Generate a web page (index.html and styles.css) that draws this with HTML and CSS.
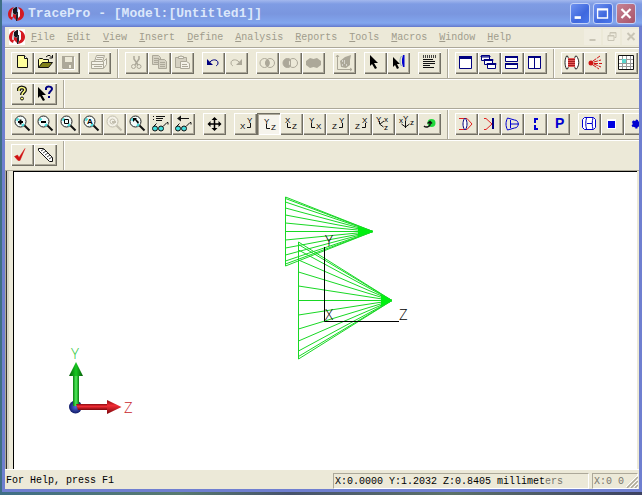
FILE: index.html
```html
<!DOCTYPE html>
<html lang="en">
<head>
<meta charset="utf-8">
<title>TracePro - [Model:[Untitled1]]</title>
<link rel="stylesheet" href="styles.css">
</head>
<body>
<svg class="defs" aria-hidden="true">
  <symbol id="logo" viewBox="0 0 16 16"><path d="M6 1C2 2 0 5 0 8s1 5 4 6l1-3-2-1 1-6zM10 1c4 1 6 4 6 7s-2 6-7 7l1-3 2-2V4z" fill="#d41820"/><path d="M6 2l3-1v6L6 10l-3 1 1-6z" fill="#c9ccd2"/><path d="M5 3l3-2h1v6L7 9 5 7z" fill="#15161c"/><path d="M5 8l3 1v5l-3-3z" fill="#d41820"/><path d="M9 6h1v6l-1 3H8V9z" fill="#22232a"/><path d="M10 3l2 1v6l-2 2z" fill="#f6f8fc"/></symbol>
  <symbol id="lens" viewBox="0 0 23 22"><circle cx="9.500" cy="8.500" r="5.500" fill="#f2fbfa" stroke="#222" stroke-width="1"/><path d="M5.500 7.500l2-2M11 13l2-2" stroke="#4dd" stroke-width="2" fill="none"/><path d="M13.500 12.500l5 5" stroke="#111" stroke-width="2"/></symbol>
  <symbol id="glasses" viewBox="0 0 23 22"><circle cx="6" cy="15.500" r="2.500" fill="#4dd" stroke="#111"/><circle cx="12" cy="15.500" r="2.500" fill="#4dd" stroke="#111"/><path d="M4.500 13.500l3-3M14 13.500l4-4h1v2" fill="none" stroke="#111"/></symbol>
</svg>
<div class="desktop">
<main class="window">
  <header class="titlebar">
    <svg class="logo"><use href="#logo"/></svg>
    <h1>TracePro - [Model:[Untitled1]]</h1>
    <div class="caption">
      <button class="cap" aria-label="Minimize"><svg viewBox="0 0 20 20"><path d="M4 14.500h7" stroke="#fff" stroke-width="3"/></svg></button>
      <button class="cap" aria-label="Maximize"><svg viewBox="0 0 20 20"><path d="M4 5h11v10H4zM4 6h11" stroke="#fff" fill="none" stroke-width="1.500"/></svg></button>
      <button class="cap close" aria-label="Close"><svg viewBox="0 0 20 20"><path d="M5 5l10 10M15 5L5 15" stroke="#fff" stroke-width="2.500"/></svg></button>
    </div>
  </header>
  <nav class="menubar">
    <svg class="logo"><use href="#logo"/></svg>
    <a href="#"><u>F</u>ile</a><a href="#"><u>E</u>dit</a><a href="#"><u>V</u>iew</a><a href="#"><u>I</u>nsert</a><a href="#"><u>D</u>efine</a><a href="#"><u>A</u>nalysis</a><a href="#"><u>R</u>eports</a><a href="#"><u>T</u>ools</a><a href="#"><u>M</u>acros</a><a href="#"><u>W</u>indow</a><a href="#"><u>H</u>elp</a>
    <div class="mdi">
      <button aria-label="Minimize document"><svg viewBox="0 0 16 16"><path d="M5 11h6" stroke="#c9c5b6" stroke-width="2"/></svg></button>
      <button aria-label="Restore document"><svg viewBox="0 0 16 16"><path d="M6.500 6V3.500h6v5H11M4.500 6.500h6v5h-6zM4.500 7h6M6.500 4h6" stroke="#c9c5b6" fill="none"/></svg></button>
      <button aria-label="Close document"><svg viewBox="0 0 16 16"><path d="M5 4l7 7M12 4l-7 7" stroke="#c9c5b6" stroke-width="2"/></svg></button>
    </div>
  </nav>

  <div class="toolbars">
  <div class="row">
    <div class="band">
      <div class="group">
        <button aria-label="New"><svg viewBox="0 0 23 22"><path d="M6.500 3.500h7l3 3v9h-10z" fill="#ffff9c" stroke="#111"/><path d="M13.500 3.500v3h3" fill="#fff" stroke="#111"/></svg></button>
        <button aria-label="Open"><svg viewBox="0 0 23 22"><path d="M4.500 15.500v-8l1-1h3l1 1h5v3" fill="#ffff9c" stroke="#111"/><path d="M4.500 15.500l4-5h10l-4 5z" fill="#808018" stroke="#111"/><path d="M12 5l2-1.500h2l2 2M18.500 3v3h-3" fill="none" stroke="#111"/></svg></button>
        <button aria-label="Save"><svg viewBox="0 0 23 22"><path d="M5 4h12v13H6l-1-1z" fill="#aca899"/><path d="M8 5h7v5H8zM12 13h2v3h-2z" fill="#ece9d8"/><path d="M17.500 5v12.500H6" stroke="#fff" fill="none"/></svg></button>
      </div>
      <div class="group">
        <button aria-label="Print"><svg viewBox="0 0 23 22"><g stroke="#aca899" fill="#f4f2e8"><path d="M6.500 9.500l2-6h8l-2 6zM9 5.500h6M8 7.500h6"/><path d="M3.500 9.500h12l3-3v6l-3 4h-12z"/><path d="M4 12.500h12M6 14.500h8M15.500 10v6"/></g></svg></button>
      </div>
    </div>
    <div class="band">
      <div class="group">
        <button aria-label="Cut"><svg viewBox="0 0 23 22"><path d="M9 4v3l4 6M14 4v3l-4 6" stroke="#aca899" fill="none" stroke-width="1.500"/><circle cx="8.500" cy="14.500" r="2" fill="none" stroke="#aca899"/><circle cx="14" cy="14.500" r="2" fill="none" stroke="#aca899"/></svg></button>
        <button aria-label="Copy"><svg viewBox="0 0 23 22"><g stroke="#aca899" fill="#d5d1c2"><path d="M4.500 3.500h6l2 2v7h-8z"/><path d="M6 6.500h5M6 8.500h5M6 10.500h5"/><path d="M10.500 7.500h6l2 2v7h-8z"/><path d="M12 10.500h5M12 12.500h5M12 14.500h5"/></g></svg></button>
        <button aria-label="Paste"><svg viewBox="0 0 23 22"><g stroke="#aca899" fill="#d5d1c2"><path d="M4.500 5.500h11v10h-11z"/><path d="M7.500 6.500v-2h2l.5-1 .5 1h2v2z" fill="#f4f2e8"/><path d="M9.500 9.500h6l3 2v5h-9z" fill="#f4f2e8"/><path d="M11 12.500h5M11 14.500h6"/></g></svg></button>
      </div>
      <div class="group">
        <button aria-label="Undo"><svg viewBox="0 0 23 22"><path d="M8 10c2-3 8-3 8 1 0 2-1 2-2 3" fill="none" stroke="#000080" stroke-width="1"/><path d="M5 7v6h6z" fill="#000080"/></svg></button>
        <button aria-label="Redo"><svg viewBox="0 0 23 22"><path d="M14 10c-2-3-8-3-8 1 0 2 1 2 2 3" fill="none" stroke="#aca899" stroke-width="1"/><path d="M17 7v6h-6z" fill="#aca899"/></svg></button>
      </div>
      <div class="group">
        <button aria-label="Intersect"><svg viewBox="0 0 23 22"><path d="M11.500 7c3 2 3 6 0 8-3-2-3-6 0-8" fill="#aca899"/><g fill="none" stroke="#aca899"><ellipse cx="8.500" cy="11" rx="4.500" ry="4.500"/><ellipse cx="14" cy="11" rx="4.500" ry="4.500"/></g></svg></button>
        <button aria-label="Subtract"><svg viewBox="0 0 23 22"><circle cx="8.500" cy="11" r="4.500" fill="#aca899" stroke="#aca899"/><circle cx="14" cy="11" r="4.500" fill="#ece9d8" stroke="#aca899"/><path d="M11.500 8v6" stroke="#aca899" fill="none"/></svg></button>
        <button aria-label="Unite"><svg viewBox="0 0 23 22"><path d="M8 6l3.500 1L15 6l4 3v4l-4 3-3.500-1L8 16l-4-3V9z" fill="#aca899"/></svg></button>
      </div>
      <div class="group">
        <button aria-label="Scale"><svg viewBox="0 0 23 22"><path d="M4.500 3v14.500H19M3 5l1.500-2L6 5M17 16l2 1.500-2 1.500" fill="none" stroke="#aca899"/><path d="M7 9l5-4 6-2-1 5v5l-4 3-5-1z" fill="#aca899"/><path d="M9 9h1M11 11h1M9 13h1M13 13h1M11 9h1" stroke="#fff"/></svg></button>
      </div>
      <div class="group">
        <button aria-label="Select"><svg viewBox="0 0 23 22"><path d="M6 3l8 8h-4l3 5-2 1-3-5-2 2z" fill="#000"/></svg></button>
        <button aria-label="Select surface"><svg viewBox="0 0 23 22"><path d="M6 5l7 7h-3l2 4-2 1-2-4-2 2z" fill="#000"/><path d="M14.500 4c-2 3-2 7 0 10" stroke="#8aa" fill="none"/><path d="M17.500 3h-1.500l-1 4v4l1 4h1.500z" fill="#0000d0"/></svg></button>
      </div>
      <div class="group">
        <button aria-label="Properties"><svg viewBox="0 0 23 22"><path d="M5.500 3v3M7.500 3v3M9.500 3v3M11.500 3v3M13.500 3v3M15.500 3v3M17.500 3v3" stroke="#444"/><path d="M5 7.500h10M5 9.500h12M5 11.500h12M5 13.500h7M5 15.500h11" stroke="#111"/></svg></button>
      </div>
    </div>
    <div class="band">
      <div class="group">
        <button aria-label="New window"><svg viewBox="0 0 23 22"><path d="M4.500 4.500h12v12h-12z" fill="#fff" stroke="#000080"/><path d="M4 5.500h13" stroke="#000080" stroke-width="3"/></svg></button>
        <button aria-label="Cascade"><svg viewBox="0 0 23 22"><g fill="#fff" stroke="#000080"><path d="M3.500 3.500h8v5h-8zM3 4h9v1H3z"/><path d="M6.500 7.500h8v5h-8zM6 7.500h9v1H6z"/><path d="M9.500 11.500h8v5h-8zM9 11.500h9v1H9z"/></g></svg></button>
        <button aria-label="Tile horizontally"><svg viewBox="0 0 23 22"><g fill="#fff" stroke="#000080"><path d="M4.500 4.500h12v5h-12zM4.500 11.500h12v5h-12z"/><path d="M4 5h13M4 12h13" stroke-width="2"/></g></svg></button>
        <button aria-label="Tile vertically"><svg viewBox="0 0 23 22"><path d="M4.500 4.500h12v12h-12zM10.500 5v11" fill="#fff" stroke="#000080"/><path d="M4 5h13" stroke="#000080" stroke-width="2"/></svg></button>
      </div>
    </div>
    <div class="band">
      <div class="group">
        <button aria-label="Trace rays"><svg viewBox="0 0 23 22"><path d="M5.500 4c-2 4-2 9 0 13h1c2-4 2-9 0-13zM14.500 4h1c3 4 3 9 0 13h-1c-2-4-2-9 0-13z" fill="#fff" stroke="#222"/><path d="M7 6h7v9H7z" fill="#e45b57"/><path d="M7 7.500h7M7 9.500h7M7 11.500h7M7 13.500h7" stroke="#a61c20"/></svg></button>
        <button aria-label="Source rays"><svg viewBox="0 0 23 22"><circle cx="7" cy="11" r="2.500" fill="#d01414"/><path d="M9 9l7-5M10 10l7-2M10 11.500h8M10 12l7 3M9 13l6 4" stroke="#d01414" stroke-dasharray="4 1"/></svg></button>
      </div>
      <div class="group">
        <button aria-label="Irradiance map"><svg viewBox="0 0 23 22"><path d="M3.500 3.500h15v14h-15z" fill="#fff" stroke="#111"/><path d="M7.500 4v13M11.500 4v13M15.500 4v13M4 7.500h14M4 11.500h14M4 14.500h14" stroke="#999"/><path d="M7 7h4v4H7z" fill="#5cd6cf"/></svg></button>
      </div>
    </div>
  </div>

  <div class="row">
    <div class="band">
      <div class="group">
        <button aria-label="About"><svg viewBox="0 0 23 22"><path d="M8 8V6c1-2 6-2 6 1 0 2-3 2-3 5" stroke="#111" stroke-width="4" fill="none"/><path d="M8 8V6c1-2 6-2 6 1 0 2-3 2-3 5" stroke="#ffff80" stroke-width="1.500" fill="none"/><circle cx="11" cy="15.500" r="1.500" fill="#ffff80" stroke="#111"/></svg></button>
        <button aria-label="Context help"><svg viewBox="0 0 23 22"><path d="M4 4l8 8H8l3 5-2 1-3-5-2 2z" fill="#000"/><path d="M12 7V5c1-2 6-2 6 1 0 2-3 2-3 5M15 13v2" stroke="#000080" stroke-width="2" fill="none"/></svg></button>
      </div>
    </div>
    <div class="band"></div>
  </div>

  <div class="row">
    <div class="band">
      <div class="group">
        <button aria-label="Zoom in"><svg viewBox="0 0 23 22"><use href="#lens"/><path d="M7 9h5M9.500 6.500v5" stroke="#000" stroke-width="2"/></svg></button>
        <button aria-label="Zoom out"><svg viewBox="0 0 23 22"><use href="#lens"/><path d="M7 9h5" stroke="#000" stroke-width="2"/></svg></button>
        <button aria-label="Zoom window"><svg viewBox="0 0 23 22"><use href="#lens"/><path d="M7.500 6.500h4v4h-4z" stroke="#000" fill="none"/></svg></button>
        <button aria-label="Zoom all"><svg viewBox="0 0 23 22"><use href="#lens"/><text x="7" y="11" class="tiny bold">A</text></svg></button>
        <button aria-label="Zoom previous"><svg viewBox="0 0 23 22"><circle cx="9.500" cy="8.500" r="5.500" fill="#f4f2e8" stroke="#c2beae"/><circle cx="9.500" cy="8.500" r="2.500" fill="none" stroke="#c2beae"/><path d="M9 9h4M13.500 12.500l5 5" stroke="#c2beae" stroke-width="2"/></svg></button>
        <button aria-label="Zoom selection"><svg viewBox="0 0 23 22"><use href="#lens"/><path d="M7 5h4l-1 1 3 3-1 2-3-4-2 2z" fill="#000"/></svg></button>
        <button aria-label="View list"><svg viewBox="0 0 23 22"><use href="#glasses"/><path d="M4 3.500h1M4 6.500h1M7 3.500h9M7 5.500h7M7 7.500h6" stroke="#111"/></svg></button>
        <button aria-label="Previous view"><svg viewBox="0 0 23 22"><use href="#glasses"/><path d="M7 5.500h10" stroke="#111"/><path d="M5 5.500l4-3v6z" fill="#111"/></svg></button>
      </div>
      <div class="group">
        <button aria-label="Pan"><svg viewBox="0 0 23 22"><path d="M11.500 5v12M6 11h11" stroke="#000" stroke-width="1.500"/><path d="M11.500 4L14.500 7h-6zM11.500 18L8.500 15h6zM4.500 11l3-3v6zM18.500 11l-3-3v6z" fill="#000"/></svg></button>
      </div>
      <div class="group">
        <button aria-label="XY view"><svg viewBox="0 0 23 22"><text x="6" y="16" class="tiny">X</text><text x="13" y="10" class="tiny">Y</text><path d="M16.500 10v4.500H13" class="axis"/></svg></button>
        <button aria-label="YZ view" class="pressed" aria-pressed="true"><svg viewBox="0 0 23 22"><text x="7" y="11" class="tiny">Y</text><text x="14" y="17" class="tiny">Z</text><path d="M9.500 11v4.500H13" class="axis"/></svg></button>
        <button aria-label="XZ view"><svg viewBox="0 0 23 22"><text x="5" y="10" class="tiny">X</text><text x="12" y="16" class="tiny">Z</text><path d="M7.500 10v4.500H11" class="axis"/></svg></button>
        <button aria-label="YX view"><svg viewBox="0 0 23 22"><text x="6" y="10" class="tiny">Y</text><text x="13" y="16" class="tiny">X</text><path d="M8.500 10v4.500H12" class="axis"/></svg></button>
        <button aria-label="ZY view"><svg viewBox="0 0 23 22"><text x="6" y="16" class="tiny">Z</text><text x="13" y="10" class="tiny">Y</text><path d="M16.500 10v4.500H13" class="axis"/></svg></button>
        <button aria-label="ZX view"><svg viewBox="0 0 23 22"><text x="6" y="16" class="tiny">Z</text><text x="13" y="10" class="tiny">X</text><path d="M16.500 10v4.500H13" class="axis"/></svg></button>
        <button aria-label="Isometric view"><svg viewBox="0 0 23 22"><text x="4" y="9" class="tiny">Y</text><text x="12" y="9" class="tiny">x</text><text x="12" y="17" class="tiny">z</text><path d="M7.500 8v3l4 3M8 11l4-3" class="axis"/></svg></button>
        <button aria-label="Silhouette view"><svg viewBox="0 0 23 22"><text x="8" y="8" class="tiny">Y</text><text x="4" y="10" class="tiny">x</text><text x="15" y="12" class="tiny">z</text><path d="M10.500 8v7M6.500 11l4 3 4-3" class="axis"/></svg></button>
        <button aria-label="Rotate"><svg viewBox="0 0 23 22"><circle cx="13.500" cy="10" r="4" fill="#22d93c"/><path d="M6 13c2 2 5 1 6-1V9M9.500 10.500l2.500-2 2 2" fill="none" stroke="#111" stroke-width="1.500"/></svg></button>
      </div>
    </div>
    <div class="band">
      <div class="group">
        <button aria-label="Lens"><svg viewBox="0 0 23 22"><path d="M4 5.500h8l5 5.500-5 5.500H4" fill="none" stroke="#e02020"/><path d="M9.500 5.500c-2 3-2 8 0 11h1c2-3 2-8 0-11z" fill="#fff" stroke="#000080"/></svg></button>
        <button aria-label="Mirror"><svg viewBox="0 0 23 22"><path d="M6 5.500h2l6 5.500-6 5.500H6" fill="none" stroke="#e02020"/><path d="M15 5v11" stroke="#000080" stroke-width="2"/></svg></button>
        <button aria-label="Concentrator"><svg viewBox="0 0 23 22"><path d="M6.500 5c-2 4-2 8 0 12l7-2c5 0 5-8 0-8zM9.500 7v8M10 11h8" fill="none" stroke="#0000d0"/></svg></button>
        <button aria-label="Baffle"><svg viewBox="0 0 23 22"><path d="M14 6h-3v4M11 12v4h3" fill="none" stroke="#0000d0" stroke-width="2"/></svg></button>
        <button aria-label="Prism"><svg viewBox="0 0 23 22"><text x="8" y="15" class="prism">P</text></svg></button>
      </div>
      <div class="group">
        <button aria-label="Cylinder"><svg viewBox="0 0 23 22"><path d="M6.500 4.500h9l2 2v8l-2 2h-9l-2-2v-8zM8.500 5c-1 3-1 8 0 11M15 5c-1 3-1 8 0 11M9 10.500h5" fill="#fff" stroke="#0000d0"/></svg></button>
        <button aria-label="Block"><svg viewBox="0 0 23 22"><path d="M6 6h9v10H6z" fill="#fff"/><path d="M7 8h7v7H7z" fill="#0000e0"/></svg></button>
        <button aria-label="Sphere"><svg viewBox="0 0 23 22"><circle cx="12" cy="11" r="3.500" fill="#0000d0" stroke="#0000d0" stroke-dasharray="2 2" stroke-width="2"/></svg></button>
      </div>
    </div>
  </div>

  <div class="row">
    <div class="band">
      <div class="group">
        <button aria-label="Check"><svg viewBox="0 0 23 22"><path d="M3.500 12.500l3-1.500 1.500 2.500 6-9-5 12H7z" fill="#d01010" stroke="#d01010" stroke-width=".5"/></svg></button>
        <button aria-label="Measure"><svg viewBox="0 0 23 22"><path d="M4.500 4.500h5l9 9v4h-3l-11-11z" fill="#fff" stroke="#111"/><path d="M7 7l3-2M9 9l3-2M11 11l3-2M13 13l3-2M15 15l3-2" stroke="#444"/></svg></button>
      </div>
    </div>
    <div class="band"></div>
  </div>
  </div>

  <section class="workspace">
    <div class="viewport">
      <svg viewBox="14 172 623 297" preserveAspectRatio="xMinYMin meet" role="img" aria-label="Model view">
        <defs>
          <linearGradient id="gs"><stop offset="0" stop-color="#087c10"/><stop offset=".5" stop-color="#4ff05a"/><stop offset="1" stop-color="#087c10"/></linearGradient>
          <linearGradient id="gh"><stop offset="0" stop-color="#045a08"/><stop offset=".5" stop-color="#16c820"/><stop offset="1" stop-color="#045a08"/></linearGradient>
          <linearGradient id="rs" x2="0" y2="1"><stop offset="0" stop-color="#8c0a10"/><stop offset=".4" stop-color="#f02c34"/><stop offset="1" stop-color="#7a060c"/></linearGradient>
          <radialGradient id="ball"><stop offset="0" stop-color="#5468d8"/><stop offset="1" stop-color="#101c68"/></radialGradient>
        </defs>
        <g class="rays">
          <path d="M285.500 197v69M373 231.500L285.500 197M373 231.500L285.500 198.500M373 231.500L285.500 202M373 231.500L285.500 208M373 231.500L285.500 215M373 231.500L285.500 223M373 231.500H285.500M373 231.500L285.500 240M373 231.500L285.500 248M373 231.500L285.500 255M373 231.500L285.500 261M373 231.500L285.500 264M373 231.500L285.500 266"/>
          <path d="M298.500 242v117M392 300.500L298.500 242M392 300.500L298.500 244.500M392 300.500L298.500 250M392 300.500L298.500 260M392 300.500L298.500 272M392 300.500L298.500 286M392 300.500H298.500M392 300.500L298.500 315M392 300.500L298.500 329M392 300.500L298.500 341M392 300.500L298.500 351M392 300.500L298.500 356.500M392 300.500L298.500 359"/>
          <path class="apex" d="M373 231.500l-15-5v10zM392 300.500l-11-6v12z"/>
        </g>
        <path class="axes" d="M324.500 247v74.500H399"/>
        <text class="label" x="325" y="246">Y</text>
        <text class="label" x="325" y="320">X</text>
        <text class="label" x="399" y="320">Z</text>
        <circle cx="75.500" cy="407" r="6.500" fill="url(#ball)"/>
        <path d="M73 375h6v31h-6z" fill="url(#gs)"/>
        <path d="M76 362l7 14H69z" fill="url(#gh)"/>
        <path d="M76 404h32v6H78z" fill="url(#rs)"/>
        <path d="M121.500 407L107 414v-14z" fill="url(#rs)"/>
        <text class="label y" x="71" y="359">Y</text>
        <text class="label z" x="124" y="413">Z</text>
      </svg>
    </div>
  </section>

  <footer class="statusbar">
    <span class="hint">For Help, press F1</span>
    <span class="pane coords">X:0.0000 Y:1.2032 Z:0.8405 millimet<span class="fade">ers</span></span>
    <span class="pane extra"><span class="fade">X:0 0</span></span>
    <svg class="grip" viewBox="0 0 12 12" aria-hidden="true"><path d="M1 12L12 1M5 12l7-7M9 12l3-3" stroke="#aca899" stroke-width="1.500"/><path d="M0 11L11 0M4 11l8-8M8 11l4-4" stroke="#fff"/></svg>
  </footer>
</main>
</div>
</body>
</html>
```
FILE: styles.css
```css
* { box-sizing: border-box; }

body {
  margin: 0;
  font-family: "Liberation Mono", monospace;
  font-size: 10px;
  color: #000;
}

.defs { position: absolute; width: 0; height: 0; }

.desktop {
  min-height: 100vh;
  display: flex;
  padding: 0 0 3px 2px;
  background: linear-gradient(90deg, #3f6f86 0, #587a70 28%, #46536c 45%, #5c7268 70%, #3c4262 100%);
}

.window {
  flex: 1;
  min-width: 0;
  display: flex;
  flex-direction: column;
  border: solid #6f7fd0;
  border-width: 0 3px 3px;
  background: #ece9d8;
}

button {
  padding: 0;
  border: 0;
  background: none;
  flex: none;
}

button svg { display: block; width: 100%; height: 100%; }

.titlebar {
  display: flex;
  align-items: center;
  height: 27px;
  margin: 0 -3px;
  padding: 0 6px;
  gap: 4px;
  background: linear-gradient(#a3b8ee 0, #7f9ce4 4px, #7a96df 14px, #82a6ee 23px, #7594e2 25px, #6376c8);
}

.logo { width: 16px; height: 16px; flex: none; }

.titlebar h1 {
  flex: 1;
  margin: 0;
  font-size: 13px;
  line-height: 16px;
  color: #dbe7fb;
  white-space: nowrap;
}

.caption { display: flex; gap: 3px; }

.cap {
  width: 20px;
  height: 21px;
  border: 1px solid #c3d2f8;
  border-radius: 3px;
  background: linear-gradient(135deg, #6f92f0, #3f68de 60%, #4a78ec);
}

.cap.close { background: linear-gradient(135deg, #c78392, #a8546a); }

.menubar {
  display: flex;
  align-items: center;
  height: 21px;
  padding-left: 4px;
  gap: 12px;
  border-bottom: 1px solid #aca899;
}

.menubar .logo { background: #fff; margin-right: -6px; }

.menubar a {
  color: #a09c8c;
  text-decoration: none;
  line-height: 12px;
  padding-top: 2px;
}

.mdi { display: flex; gap: 2px; margin-left: auto; }
.mdi button { width: 17px; height: 16px; background: #f0ede0; }

.toolbars {
  display: grid;
  grid-template-rows: 31px 30px 31px 31px;
}

.row {
  display: flex;
  overflow: hidden;
  border-top: 1px solid #fff;
  border-bottom: 1px solid #aca899;
}

.band {
  display: flex;
  flex: none;
  gap: 8px;
  padding: 3px 6px 0;
  border-right: 1px solid #aca899;
}

.band + .band { border-left: 1px solid #fff; }
.band:last-child { flex: 1 0 auto; border-right: 0; }

.group { display: flex; }

.group button {
  width: 23px;
  height: 22px;
  box-shadow: inset 1px 1px #fff, inset -1px -1px #716f64, inset -2px -2px #aca899;
}

.group .pressed {
  background: #f6f4ec;
  box-shadow: inset 1px 1px #716f64, inset 2px 2px #aca899, inset -1px -1px #fff;
}

.tiny { font: 8px "Liberation Sans", sans-serif; }
.bold { font-weight: bold; }
.prism { font: bold 14px "Liberation Sans", sans-serif; fill: #0000d0; }
.axis { fill: none; stroke: #111; }

.workspace {
  flex: 1;
  display: flex;
  padding: 0 2px 0 7px;
  border-left: 1px solid #aca899;
  box-shadow: inset 1px 0 #333, inset 3px 0 #d8d4c4;
}

.viewport {
  flex: 1;
  min-width: 0;
  border: solid #000;
  border-width: 1px 0 0 1px;
  background: #fff;
}

.viewport svg { display: block; width: 100%; }

.rays { fill: none; stroke: #18d824; }
.rays .apex { fill: #00f010; stroke: none; }
.axes { fill: none; stroke: #000; }
.label { font: 300 15px "Open Sans", sans-serif; }
.label.y { fill: #30c840; }
.label.z { fill: #c81e2c; }

.statusbar {
  position: relative;
  display: flex;
  align-items: center;
  height: 20px;
  gap: 3px;
  padding: 2px 1px 0;
  border-top: 1px solid #fff;
}

.hint { flex: 1; }

.pane {
  height: 16px;
  line-height: 15px;
  padding-left: 1px;
  white-space: nowrap;
  border: 1px solid;
  border-color: #aca899 #fff #fff #aca899;
}

.coords { width: 256px; }
.extra { width: 46px; }
.fade { color: #77756c; }

.grip {
  position: absolute;
  right: 1px;
  bottom: 1px;
  width: 12px;
  height: 12px;
}
```
